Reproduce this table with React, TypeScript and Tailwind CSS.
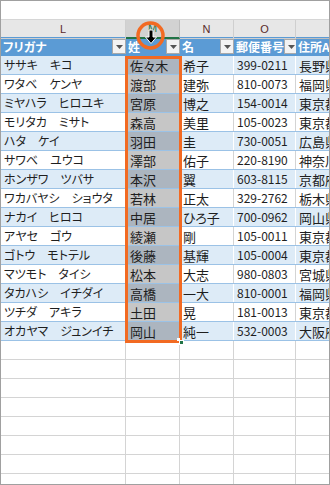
import React from "react";

const rows: [string, string, string, string, string][] = [
  ["ササキ　キコ", "佐々木", "希子", "399-0211", "長野県"],
  ["ワタベ　ケンヤ", "渡部", "建弥", "810-0073", "福岡県"],
  ["ミヤハラ　ヒロユキ", "宮原", "博之", "154-0014", "東京都"],
  ["モリタカ　ミサト", "森高", "美里", "105-0023", "東京都"],
  ["ハタ　ケイ", "羽田", "圭", "730-0051", "広島県"],
  ["サワベ　ユウコ", "澤部", "佑子", "220-8190", "神奈川"],
  ["ホンザワ　ツバサ", "本沢", "翼", "603-8115", "京都府"],
  ["ワカバヤシ　ショウタ", "若林", "正太", "329-2762", "栃木県"],
  ["ナカイ　ヒロコ", "中居", "ひろ子", "700-0962", "岡山県"],
  ["アヤセ　ゴウ", "綾瀬", "剛", "105-0011", "東京都"],
  ["ゴトウ　モトテル", "後藤", "基輝", "105-0004", "東京都"],
  ["マツモト　タイシ", "松本", "大志", "980-0803", "宮城県"],
  ["タカハシ　イチダイ", "高橋", "一大", "810-0001", "福岡県"],
  ["ツチダ　アキラ", "土田", "晃", "181-0013", "東京都"],
  ["オカヤマ　ジュンイチ", "岡山", "純一", "532-0003", "大阪府"],
];

const grid = "grid grid-cols-[125px_54px_54px_62px_1fr]";

function FilterBtn() {
  return (
    <div className="w-[14px] h-[15px] shrink-0 bg-[#f3f3f3] border border-[#a9a9a9] flex items-center justify-center">
      <svg width="7" height="4" viewBox="0 0 7 4">
        <polygon points="0,0 7,0 3.5,4" fill="#555" />
      </svg>
    </div>
  );
}

function HeadCell({ label, last }: { label: string; last?: boolean }) {
  return (
    <div className="flex items-center justify-between pl-[2px] overflow-hidden whitespace-nowrap">
      <span className="text-white font-bold text-[12px] leading-none">{label}</span>
      {!last && <FilterBtn />}
    </div>
  );
}

export default function App() {
  return (
    <div
      className="relative w-[330px] h-[485px] overflow-hidden bg-white border border-[#a0a0a0] [font-feature-settings:'palt']"
      style={{ fontFamily: "'Noto Sans CJK JP', 'Noto Sans', sans-serif" }}
    >
      {/* top blank area */}
      <div className="h-[19px] border-b border-[#d6d6d6]" />

      {/* column letters */}
      <div className={`${grid} h-[17px] bg-[#e7e7e7] text-[11px] text-[#5a2a2a]`} style={{ fontFamily: "'Liberation Sans', sans-serif" }}>
        <div className="flex items-center justify-center border-r border-[#cfcfcf] border-b border-[#bdbdbd]">L</div>
        <div className="flex items-center justify-center bg-[#d2d2d2] border-r border-[#bdbdbd] border-b-2 border-b-[#217346] text-[#217346]">M</div>
        <div className="flex items-center justify-center border-r border-[#cfcfcf] border-b border-[#bdbdbd]">N</div>
        <div className="flex items-center justify-center border-r border-[#cfcfcf] border-b border-[#bdbdbd]">O</div>
        <div className="flex items-center justify-center border-b border-[#bdbdbd]"></div>
      </div>

      {/* table header */}
      <div className={`${grid} h-[19px] bg-[#5b9bd5]`}>
        <HeadCell label="フリガナ" />
        <HeadCell label="姓" />
        <HeadCell label="名" />
        <HeadCell label="郵便番号" />
        <HeadCell label="住所A" last />
      </div>

      {/* data rows */}
      {rows.map((r, i) => {
        const blue = i % 2 === 0;
        const bg = blue ? "bg-[#ddebf7]" : "bg-white";
        const sel = blue ? "bg-[#acb5bf]" : "bg-[#c6c6c6]";
        const vr = blue ? "border-r border-white" : "border-r border-[#d4d4d4]";
        return (
          <div
            key={i}
            className={`${grid} h-[19px] border-b border-[#9bc2e6] ${bg} text-[13px] text-[#1e1e1e] leading-none whitespace-nowrap`}
          >
            <div className={`flex items-center pl-[3px] text-[12px] ${vr} overflow-hidden`}>{r[0]}</div>
            <div className={`flex items-center pl-[4px] ${sel}`}>{r[1]}</div>
            <div className={`flex items-center pl-[3px] ${vr}`}>{r[2]}</div>
            <div className={`flex items-center pl-[3px] ${vr} text-[12px]`}>{r[3]}</div>
            <div className="flex items-center pl-[3px] overflow-hidden">{r[4]}</div>
          </div>
        );
      })}

      {/* empty rows */}
      {Array.from({ length: 8 }).map((_, i) => (
        <div key={i} className={`${grid} h-[19px] border-b border-[#d4d4d4]`}>
          <div className="border-r border-[#d4d4d4]" />
          <div className="border-r border-[#d4d4d4]" />
          <div className="border-r border-[#d4d4d4]" />
          <div className="border-r border-[#d4d4d4]" />
          <div />
        </div>
      ))}

      {/* selection border */}
      <div className="absolute left-[124px] top-[55px] w-[57px] h-[287px] border-[3px] border-[#f26a22]" />
      {/* fill handle */}
      <div className="absolute left-[176px] top-[337px] w-[3px] h-[3px] bg-white" />
      <div className="absolute left-[178px] top-[339px] w-[5px] h-[5px] bg-[#217346] border border-white" />

      {/* circle + cursor */}
      <svg className="absolute left-0 top-0" width="330" height="80" viewBox="0 0 330 80">
        <circle cx="149.5" cy="34.5" r="12.5" fill="none" stroke="#f26a22" strokeWidth="3.5" />
        <path
          d="M148 29 L152 29 L152 36 L155.5 36 L150 42.5 L144.5 36 L148 36 Z"
          fill="#000"
          stroke="#fff"
          strokeWidth="1"
          strokeLinejoin="miter"
        />
      </svg>
    </div>
  );
}
